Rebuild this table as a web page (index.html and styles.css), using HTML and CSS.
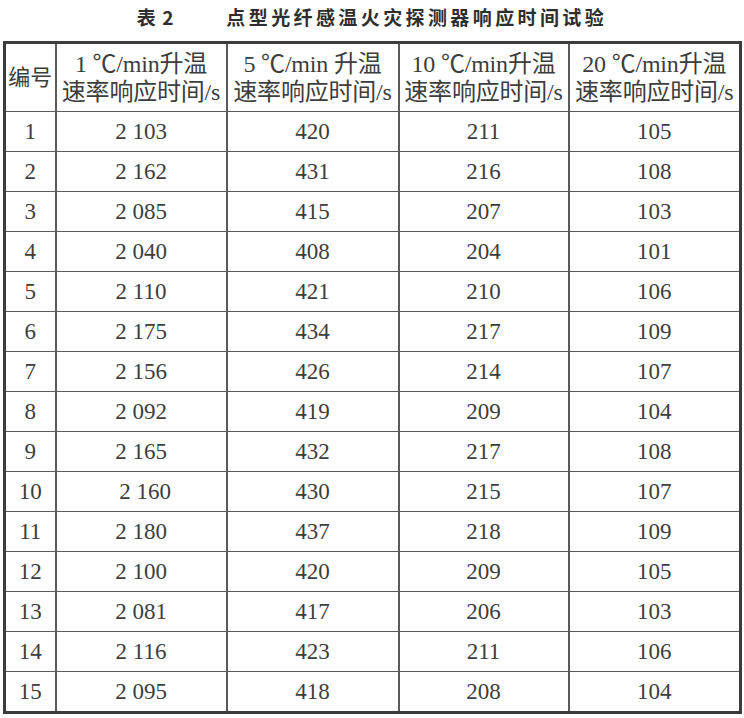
FILE: index.html
```html
<!DOCTYPE html>
<html lang="zh">
<head>
<meta charset="utf-8">
<title>表 2 点型光纤感温火灾探测器响应时间试验</title>
<link rel="stylesheet" href="styles.css">
</head>
<body>
<div class="caption"><span class="cap-no">表 2</span><span class="cap-text">点型光纤感温火灾探测器响应时间试验</span></div>
<table class="data">
<colgroup>
<col class="c0"><col class="c1"><col class="c2"><col class="c3"><col class="c4">
</colgroup>
<thead>
<tr>
<th class="id-head">编号</th>
<th>1 ℃/min升温<br>速率响应时间/s</th>
<th>5 ℃/min 升温<br>速率响应时间/s</th>
<th>10 ℃/min升温<br>速率响应时间/s</th>
<th>20 ℃/min升温<br>速率响应时间/s</th>
</tr>
</thead>
<tbody>
<tr><td>1</td><td>2 103</td><td>420</td><td>211</td><td>105</td></tr>
<tr><td>2</td><td>2 162</td><td>431</td><td>216</td><td>108</td></tr>
<tr><td>3</td><td>2 085</td><td>415</td><td>207</td><td>103</td></tr>
<tr><td>4</td><td>2 040</td><td>408</td><td>204</td><td>101</td></tr>
<tr><td>5</td><td>2 110</td><td>421</td><td>210</td><td>106</td></tr>
<tr><td>6</td><td>2 175</td><td>434</td><td>217</td><td>109</td></tr>
<tr><td>7</td><td>2 156</td><td>426</td><td>214</td><td>107</td></tr>
<tr><td>8</td><td>2 092</td><td>419</td><td>209</td><td>104</td></tr>
<tr><td>9</td><td>2 165</td><td>432</td><td>217</td><td>108</td></tr>
<tr><td>10</td><td class="shift">2 160</td><td>430</td><td>215</td><td>107</td></tr>
<tr><td>11</td><td>2 180</td><td>437</td><td>218</td><td>109</td></tr>
<tr><td>12</td><td>2 100</td><td>420</td><td>209</td><td>105</td></tr>
<tr><td>13</td><td>2 081</td><td>417</td><td>206</td><td>103</td></tr>
<tr><td>14</td><td>2 116</td><td>423</td><td>211</td><td>106</td></tr>
<tr><td>15</td><td>2 095</td><td>418</td><td>208</td><td>104</td></tr>
</tbody>
</table>
</body>
</html>
```
FILE: styles.css
```css
html, body {
  margin: 0;
  padding: 0;
  background: #ffffff;
}
body {
  width: 744px;
  height: 718px;
  overflow: hidden;
  color: #3a3a3a;
  font-family: "Liberation Serif", "Noto Sans CJK SC", serif;
}
.caption {
  height: 41px;
  box-sizing: border-box;
  padding-top: 3px;
  text-align: center;
  font-family: "Noto Sans CJK SC", sans-serif;
  font-weight: 700;
  font-size: 19px;
  line-height: 28px;
  color: #2e2e2e;
}
.cap-no {
  margin-right: 52px;
  letter-spacing: 1px;
}
.cap-text {
  letter-spacing: 3.4px;
}
.data {
  margin-left: 3px;
  width: 737px;
  border-collapse: collapse;
  table-layout: fixed;
  border: 3px solid #3c3c3c;
}
.c0 { width: 51px; }
.c1 { width: 171px; }
.c2 { width: 172px; }
.c3 { width: 170px; }
.c4 { width: 172px; }
.data th, .data td {
  border: 1px solid #5a5a5a;
  border-left-width: 2px;
  border-right-width: 2px;
  padding: 0;
  text-align: center;
  font-weight: 400;
  color: #3d3d3d;
}
.data th {
  height: 67px;
  font-size: 24px;
  line-height: 28px;
  white-space: nowrap;
  letter-spacing: -0.2px;
}
.data th.id-head {
  font-size: 22px;
  letter-spacing: 0;
}
.data td {
  height: 39px;
  font-size: 23px;
  line-height: 26px;
}
.data td.shift {
  padding-left: 8px;
}
```
